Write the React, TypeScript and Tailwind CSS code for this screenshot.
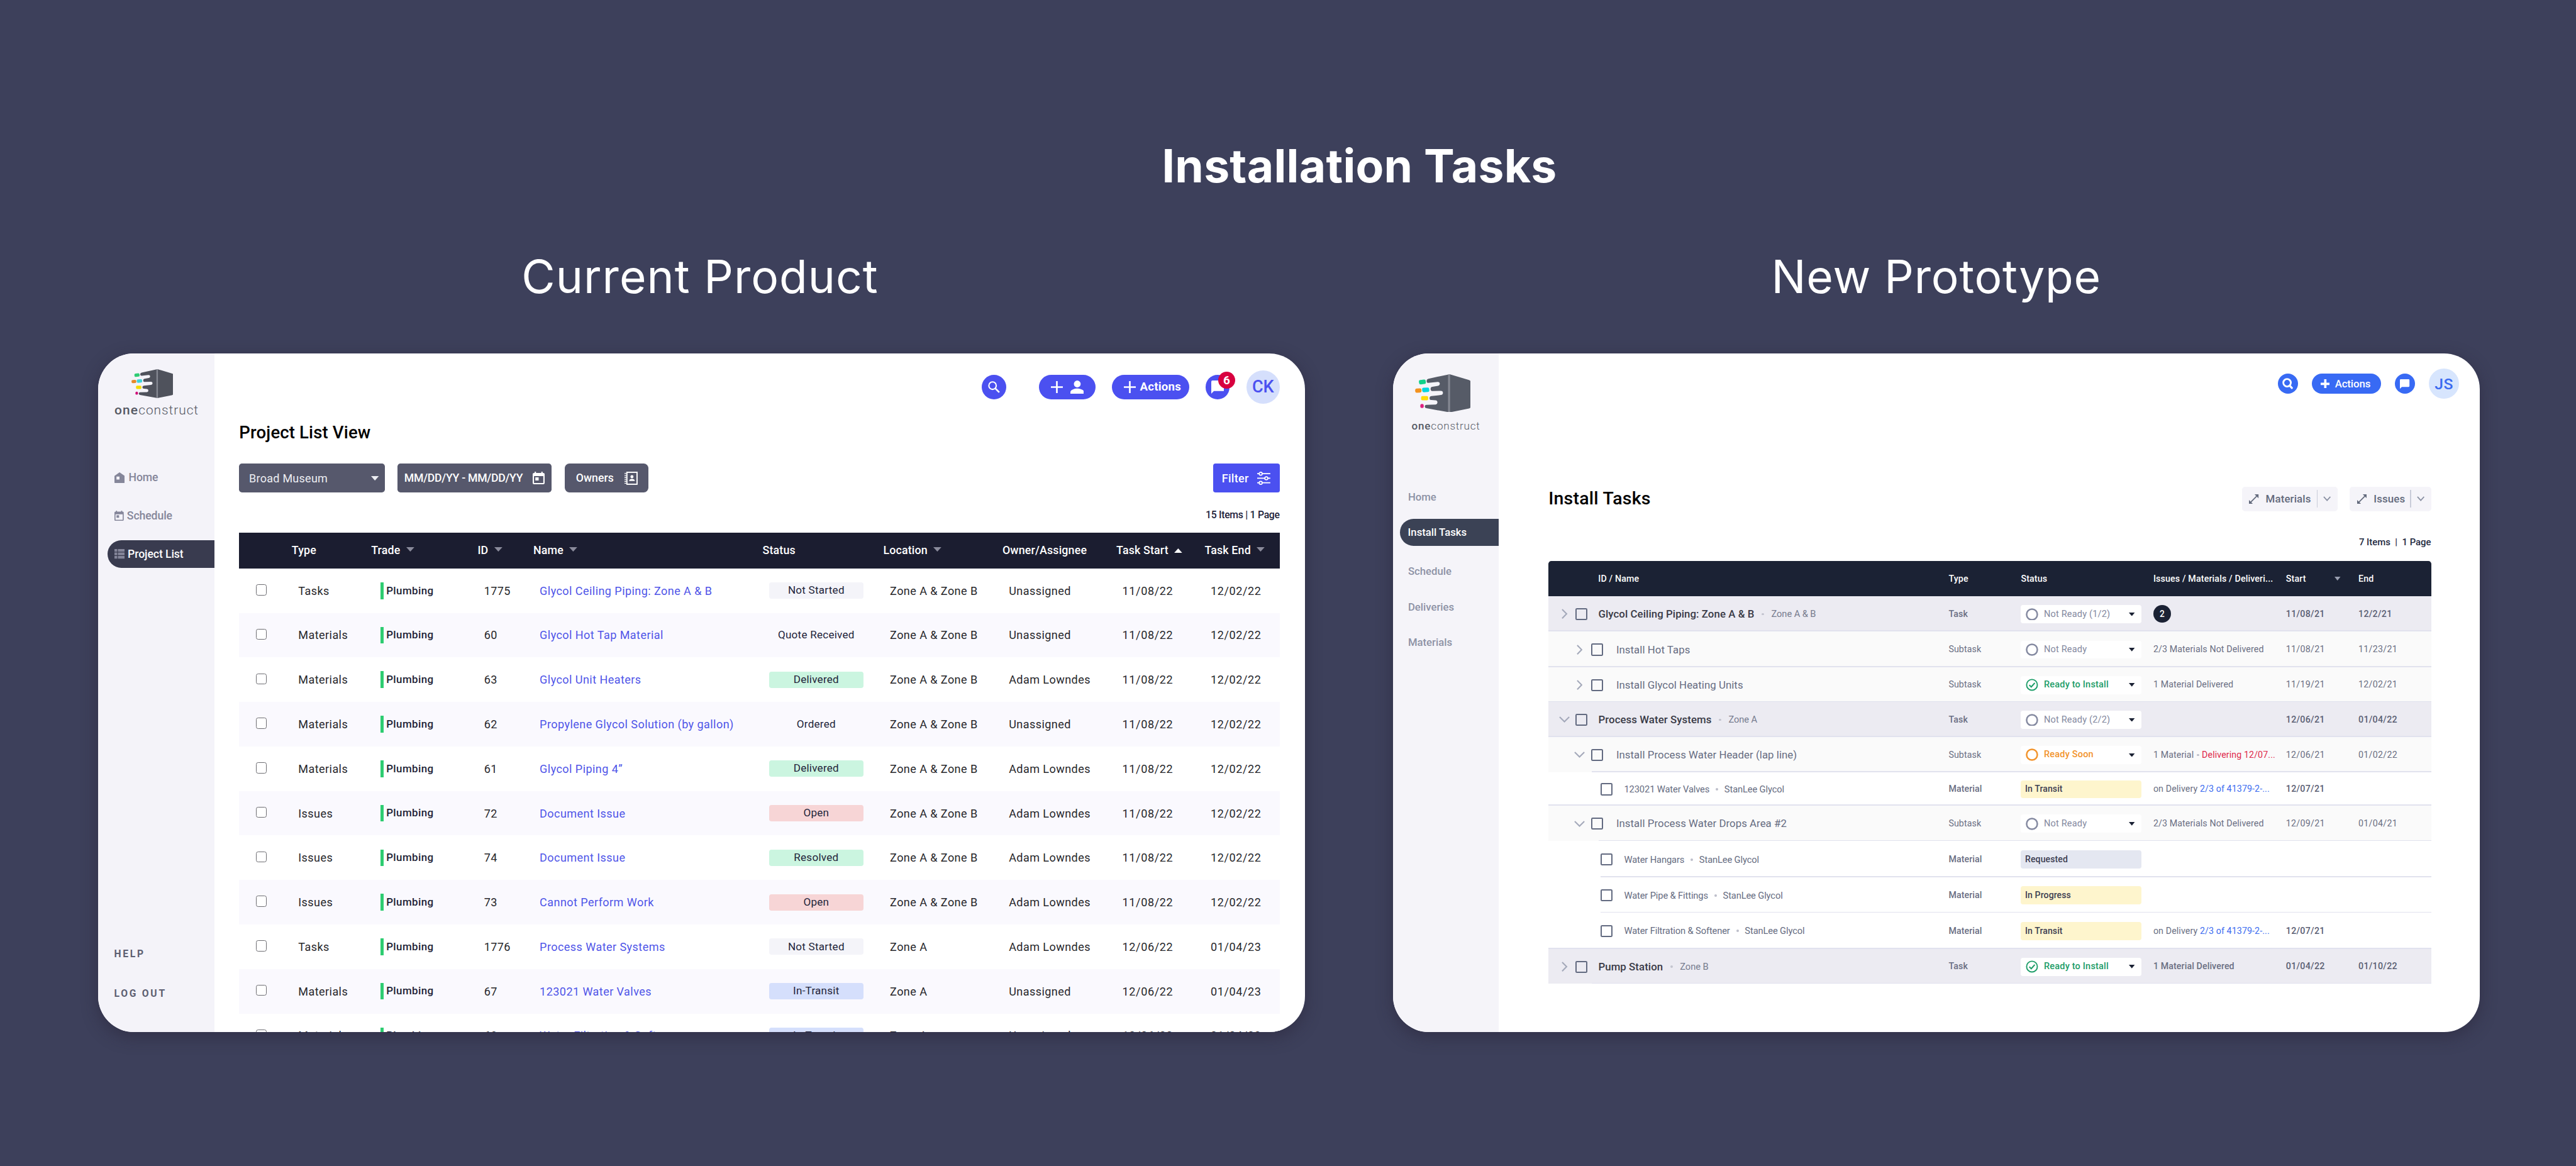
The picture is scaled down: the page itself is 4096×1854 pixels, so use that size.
import React from "react";

/* ---------- icons ---------- */

type LogoColors = { body: string; green: string; orange: string; cyan: string; yellow: string; pink: string };

const mutedLogo: LogoColors = { body: "#4f525c", green: "#2fcb74", orange: "#e58a2b", cyan: "#3dd3d8", yellow: "#f5dc00", pink: "#cf0d78" };
const vividLogo: LogoColors = { body: "#565b67", green: "#12d18a", orange: "#f3921f", cyan: "#05d5de", yellow: "#ffdc0a", pink: "#de2080" };

function LogoMark({ colors, className }: { colors: LogoColors; className: string }) {
  return (
    <svg viewBox="119 55 211 145" preserveAspectRatio="none" className={className}>
      <path
        fill={colors.body}
        d="M246 56 L170 72 Q163 74 163 81 Q163 88 170 88 L205 84 Q213 84 213 91 Q213 98 206 99 L185 103 Q178 104 178 111 Q178 119 186 119 L217 118 Q225 118 225 126 Q225 133 217 134 L182 138 Q174 139 174 146 Q174 153 182 153 L197 154 Q204 155 204 162 Q204 169 197 170 L162 171 Q156 171 156 177 Q156 183 162 184 L246 199 Z"
      />
      <path fill={colors.body} d="M250 55 L324 77 Q330 79 330 84 V178 Q330 183 324 185 L250 200 Z" />
      <rect x="244.5" y="55.5" width="7.5" height="144" fill="#858892" />
      <rect x="134" y="76" width="26" height="17" rx="6" fill={colors.green} transform="rotate(-7 147 85)" />
      <rect x="119.5" y="109" width="24" height="16" rx="6" fill={colors.orange} transform="rotate(-4 131 117)" />
      <rect x="146" y="106" width="27" height="17" rx="6" fill={colors.cyan} transform="rotate(-4 159 114)" />
      <rect x="142" y="138" width="27" height="16" rx="5" fill={colors.yellow} />
      <rect x="139" y="168" width="13" height="15" rx="6" fill={colors.pink} />
    </svg>
  );
}

const Plus = ({ size, width }: { size: number; width: number }) => (
  <svg width={size} height={size} viewBox="0 0 20 20" fill="none" stroke="currentColor" strokeWidth={width}>
    <path d="M10 0V20M0 10H20" />
  </svg>
);

const SearchThin = () => (
  <svg width="20" height="20" viewBox="0 0 20 20" fill="none" stroke="currentColor" strokeWidth="2.2">
    <circle cx="7.6" cy="7.6" r="6.2" />
    <path d="M12 12L18.8 18.8" strokeWidth="2.8" />
  </svg>
);

const SearchBold = () => (
  <svg width="18" height="19" viewBox="0 0 18 19" fill="none" stroke="currentColor" strokeWidth="3" strokeLinecap="round">
    <circle cx="8" cy="8" r="6.3" />
    <path d="M12.4 12.8L16 16.6" strokeWidth="3.4" />
  </svg>
);

const Person = () => (
  <svg width="23" height="23" viewBox="0 0 23 23" fill="currentColor">
    <circle cx="11.5" cy="5.8" r="5.7" />
    <path d="M0 23V19.5C0 15.5 7.5 13.5 11.5 13.5S23 15.5 23 19.5V23Z" />
  </svg>
);

const Bubble = ({ size }: { size: number }) => (
  <svg width={size} height={size} viewBox="0 0 20 20" fill="currentColor">
    <path d="M1.8 0H18.2A1.8 1.8 0 0 1 20 1.8V14.2A1.8 1.8 0 0 1 18.2 16H4L0 20V1.8A1.8 1.8 0 0 1 1.8 0Z" />
  </svg>
);

const HomeIcon = () => (
  <svg width="17" height="18" viewBox="0 0 17 18" fill="currentColor">
    <path fillRule="evenodd" d="M8.5 0L17 6V16.8Q17 18 15.8 18H1.2Q0 18 0 16.8V6ZM3.4 7V12H8.4V7Z" />
  </svg>
);

const CalendarIcon = ({ w, h }: { w: number; h: number }) => (
  <svg width={w} height={h} viewBox="3 1 18 20" preserveAspectRatio="none" fill="currentColor">
    <path d="M19 3h-1V1h-2v2H8V1H6v2H5c-1.11 0-2 .9-2 2v14a2 2 0 002 2h14c1.1 0 2-.9 2-2V5c0-1.1-.9-2-2-2zm0 16H5V8h14v11zM7 10h5v5H7z" />
  </svg>
);

const ListIcon = () => (
  <svg width="17" height="16" viewBox="0 0 17 16" fill="currentColor">
    <path d="M0 0H4.6V4.4H0ZM5.8 0H17V4.4H5.8ZM0 5.8H4.6V10.2H0ZM5.8 5.8H17V10.2H5.8ZM0 11.6H4.6V16H0ZM5.8 11.6H17V16H5.8Z" />
  </svg>
);

const AddressBook = () => (
  <svg width="22" height="22" viewBox="0 0 22 22" fill="none" stroke="currentColor">
    <rect x="4" y="1" width="17" height="20" strokeWidth="2" />
    <path d="M0 2.8H3M0 6.2H3M0 9.5H3M0 12.8H3M0 16.1H3M0 19.3H3" strokeWidth="1.4" />
    <circle cx="12.5" cy="8.4" r="2.6" fill="currentColor" stroke="none" />
    <path d="M7.8 15.6C7.8 12.8 10.5 12 12.5 12S17.2 12.8 17.2 15.6Z" fill="currentColor" stroke="none" />
  </svg>
);

const Sliders = () => (
  <svg width="22" height="22" viewBox="0 0 22 22" fill="none" stroke="currentColor" strokeWidth="1.8">
    <path d="M0 3.4H3.2M8.6 3.4H22M0 11H12.6M18 11H22M0 18.6H3.2M8.6 18.6H22" />
    <circle cx="5.9" cy="3.4" r="2.5" />
    <circle cx="15.3" cy="11" r="2.5" />
    <circle cx="5.9" cy="18.6" r="2.5" />
  </svg>
);

const ExpandArrows = () => (
  <svg width="16" height="16" viewBox="0 0 16 16" fill="currentColor">
    <path d="M3 13L13 3" stroke="currentColor" strokeWidth="1.7" />
    <path d="M16 0V6.6L9.4 0ZM0 16V9.4L6.6 16Z" />
  </svg>
);

const ChevronDown = ({ w, h, stroke = 2.2 }: { w: number; h: number; stroke?: number }) => (
  <svg width={w} height={h} viewBox={`0 0 ${w} ${h}`} fill="none" stroke="currentColor" strokeWidth={stroke}>
    <path d={`M1 1L${w / 2} ${h - 2}L${w - 1} 1`} />
  </svg>
);

const ChevronRight = () => (
  <svg width="10" height="17" viewBox="0 0 10 17" fill="none" stroke="currentColor" strokeWidth="2.2">
    <path d="M1 1L8.4 8.5L1 16" />
  </svg>
);

const Triangle = ({ w, h, up = false }: { w: number; h: number; up?: boolean }) => (
  <svg width={w} height={h} viewBox="0 0 10 6" preserveAspectRatio="none" fill="currentColor">
    <path d={up ? "M0 6L5 0L10 6Z" : "M0 0L5 6L10 0Z"} />
  </svg>
);

const StatusRing = ({ done }: { done: boolean }) => (
  <svg width="21" height="21" viewBox="0 0 21 21" fill="none" stroke="currentColor" strokeWidth="2.4">
    <circle cx="10.5" cy="10.5" r="9" strokeWidth={done ? 2 : 2.6} />
    {done && <path d="M6 10.8L9.3 14L15.2 7.2" strokeWidth="2.2" />}
  </svg>
);

/* ---------- current product ---------- */

const projectColumns = [
  { label: "" },
  { label: "Type" },
  { label: "Trade", sort: "down" },
  { label: "ID", sort: "down" },
  { label: "Name", sort: "down" },
  { label: "Status" },
  { label: "Location", sort: "down" },
  { label: "Owner/Assignee" },
  { label: "Task Start", sort: "up" },
  { label: "Task End", sort: "down" },
];

const pillColors: Record<string, string> = {
  "Not Started": "bg-[#f4f4f9]",
  Delivered: "bg-[#cbf5e0]",
  Resolved: "bg-[#cbf5e0]",
  Open: "bg-[#f7d5d6]",
  "In-Transit": "bg-[#d5dffc]",
};

const projectRows = [
  ["Tasks", "1775", "Glycol Ceiling Piping: Zone A & B", "Not Started", "Zone A & Zone B", "Unassigned", "11/08/22", "12/02/22"],
  ["Materials", "60", "Glycol Hot Tap Material", "Quote Received", "Zone A & Zone B", "Unassigned", "11/08/22", "12/02/22"],
  ["Materials", "63", "Glycol Unit Heaters", "Delivered", "Zone A & Zone B", "Adam Lowndes", "11/08/22", "12/02/22"],
  ["Materials", "62", "Propylene Glycol Solution (by gallon)", "Ordered", "Zone A & Zone B", "Unassigned", "11/08/22", "12/02/22"],
  ["Materials", "61", "Glycol Piping 4”", "Delivered", "Zone A & Zone B", "Adam Lowndes", "11/08/22", "12/02/22"],
  ["Issues", "72", "Document Issue", "Open", "Zone A & Zone B", "Adam Lowndes", "11/08/22", "12/02/22"],
  ["Issues", "74", "Document Issue", "Resolved", "Zone A & Zone B", "Adam Lowndes", "11/08/22", "12/02/22"],
  ["Issues", "73", "Cannot Perform Work", "Open", "Zone A & Zone B", "Adam Lowndes", "11/08/22", "12/02/22"],
  ["Tasks", "1776", "Process Water Systems", "Not Started", "Zone A", "Adam Lowndes", "12/06/22", "01/04/23"],
  ["Materials", "67", "123021 Water Valves", "In-Transit", "Zone A", "Unassigned", "12/06/22", "01/04/23"],
  ["Materials", "68", "Water Filtration & Softener", "In-Transit", "Zone A", "Unassigned", "12/06/22", "01/04/23"],
];

const projectGrid = "grid grid-cols-[87.9px_133px_178.2px_93.3px_383.7px_202px_199.5px_190.8px_147.7px_1fr] items-center";

function ProjectSidebar() {
  return (
    <aside className="flex w-[194.7px] shrink-0 flex-col bg-[#f4f3f9]">
      <LogoMark colors={mutedLogo} className="ml-[55.7px] mt-[26.3px] h-[48.4px] w-[70.3px]" />
      <div className="ml-[27.5px] mt-[6.3px] flex text-[22px] leading-[28px] text-[#555863]">
        <span className="font-medium tracking-[1.3px]">one</span>
        <span className="font-light tracking-[1px]">construct</span>
      </div>
      <nav className="mt-[75px] flex flex-col gap-[17px] text-[18.6px] font-medium tracking-[-0.1px] text-[#85869a]">
        <div className="flex h-[47px] items-center gap-[6.8px] pl-[27.5px]"><HomeIcon /><span>Home</span></div>
        <div className="flex h-[47px] items-center gap-[5.5px] pl-[27.5px]"><CalendarIcon w={15.5} h={17} /><span>Schedule</span></div>
        <div className="ml-[16.4px] flex h-[47px] items-center gap-[5.3px] rounded-l-full bg-[#393b4f] pl-[11.1px]"><ListIcon /><span className="text-white">Project List</span></div>
      </nav>
      <div className="mb-[52px] ml-[27px] mt-auto flex flex-col gap-[42.5px] text-[16.5px] font-bold leading-[24px] tracking-[2.9px] text-[#5d5f71]">
        <span>HELP</span>
        <span>LOG OUT</span>
      </div>
    </aside>
  );
}

function ProjectListCard() {
  return (
    <section className="flex h-[1136px] w-[2020px] shrink-0 overflow-hidden rounded-[60px] bg-white">
      <ProjectSidebar />
      <main className="flex min-w-0 flex-1 flex-col pl-[41.7px] pr-[42px] pt-[28px]">
        <header className="flex h-[56px] shrink-0 items-center justify-end text-white">
          <button className="mr-[55px] flex size-[40.3px] items-center justify-center rounded-full bg-[#4b50f0]"><SearchThin /></button>
          <button className="mr-[28px] flex h-[40.3px] w-[94.5px] items-center rounded-full bg-[#4b50f0] pl-[20.5px]"><Plus size={20} width={2.8} /><span className="ml-[12px]"><Person /></span></button>
          <button className="mr-[27.3px] flex h-[40.3px] w-[129.3px] items-center rounded-full bg-[#4b50f0] pl-[20px] text-[19.7px] font-bold tracking-[0.2px]"><Plus size={20} width={2.8} /><span className="ml-[6.8px]">Actions</span></button>
          <button className="relative mr-[28px] flex size-[40.3px] items-center justify-center rounded-full bg-[#4b50f0]">
            <Bubble size={22} />
            <span className="absolute -top-[5.5px] left-[21.5px] flex size-[28px] items-center justify-center rounded-full bg-[#d8003f] text-[20px] font-bold leading-none">6</span>
          </button>
          <div className="flex size-[55.8px] items-center justify-center rounded-full bg-[#d5dffc] text-[28.5px] font-medium tracking-[-0.3px] text-[#4b50f0]">CK</div>
        </header>
        <h3 className="mt-[31px] h-[34px] shrink-0 text-[29px] font-medium leading-[34px] tracking-[0.15px] text-black">Project List View</h3>
        <div className="mt-[34.7px] flex h-[49px] shrink-0 text-white">
          <div className="mr-[21.5px] flex w-[243.9px] items-center justify-between rounded-[5px] bg-[#56586c] pl-[16.5px] pr-[10px] text-[19px] tracking-[0.26px] text-[#ecedf2]"><span>Broad Museum</span><Triangle w={13} h={7.5} /></div>
          <div className="mr-[22px] flex w-[257.9px] items-center justify-between rounded-[5px] bg-[#56586c] pl-[11px] pr-[12px] text-[18.6px] font-medium tracking-[-0.29px]"><span>MM/DD/YY - MM/DD/YY</span><CalendarIcon w={20} h={21} /></div>
          <div className="flex w-[139.7px] items-center justify-between rounded-[8px] bg-[#56586c] pl-[18.5px] pr-[17.7px] text-[18.6px] font-medium"><span>Owners</span><AddressBook /></div>
          <button className="ml-auto flex w-[110.8px] items-center justify-between rounded-[4px] bg-[#4b50f0] pl-[14px] pr-[16px] text-[19px] font-medium tracking-[0.3px]"><span>Filter</span><Sliders /></button>
        </div>
        <div className="mt-[26.5px] h-[20px] shrink-0 text-right text-[16.6px] font-medium leading-[20px] tracking-[-0.28px] text-[#20223a]">15 Items | 1 Page</div>
        <div className="mt-[20.1px] shrink-0">
          <div className={`${projectGrid} h-[60.3px] bg-[#1b1d30] text-[18.8px] font-medium tracking-[0.15px] text-white`}>
            {projectColumns.map((c) => (
              <div key={c.label} className="flex items-center gap-[10px] whitespace-nowrap">
                <span>{c.label}</span>
                {c.sort === "down" && <span className="-mt-[3px] text-[#8a8b9b]"><Triangle w={13.5} h={7.5} /></span>}
                {c.sort === "up" && <span><Triangle up w={13.5} h={7.5} /></span>}
              </div>
            ))}
          </div>
          {projectRows.map(([type, id, name, status, location, owner, start, end]) => (
            <div key={id} className={`${projectGrid} h-[74.5px] whitespace-nowrap text-[19px] tracking-[0.46px] text-[#27272b] even:bg-white odd:bg-[#faf9fe]`}>
              <div className="-mt-[3px] ml-[28px] size-[18.5px] rounded-[3.5px] border-[1.6px] border-[#6d6d72] bg-white" />
              <div className="pl-[11px]">{type}</div>
              <div className="flex items-center pl-[15.3px]">
                <span className="h-[28px] w-[5.2px] bg-[#2ecc71]" />
                <span className="pl-[4.8px] text-[17.8px] font-medium tracking-[0.44px] text-[#1d1f36]">Plumbing</span>
              </div>
              <div className="pl-[10.8px]">{id}</div>
              <div className="pl-[10.6px] text-[#4f55e8]">{name}</div>
              <div className="pl-[11.2px]">
                <div className={`flex h-[27.5px] w-[157.3px] items-center justify-center rounded-[4px] text-[18px] tracking-[0.25px] text-[#23243a] ${pillColors[status] ?? ""}`}>{status}</div>
              </div>
              <div className="pl-[11.3px]">{location}</div>
              <div className="pl-[10.8px]">{owner}</div>
              <div className="pl-[10px] tracking-[0.66px]">{start}</div>
              <div className="pl-[10px] tracking-[0.66px]">{end}</div>
            </div>
          ))}
        </div>
      </main>
    </section>
  );
}

/* ---------- new prototype ---------- */

type Kind = "task" | "subtask" | "material";
type TaskRow = {
  kind: Kind;
  name: string;
  detail?: string;
  open?: boolean;
  status: string;
  note?: React.ReactNode;
  start?: string;
  end?: string;
  height: string;
  line: string;
};

const Link = ({ children }: { children: string }) => <span className="text-[#3b6cf0]">{children}</span>;

const LateDelivery = () => (
  <div className="flex items-center">
    <span>1 Material</span>
    <span className="ml-[5.5px] mr-[4.5px] size-[3.5px] rounded-full bg-[#bdbfca]" />
    <span className="text-[#e0294b]">Delivering 12/07...</span>
  </div>
);

const taskRows: TaskRow[] = [
  { kind: "task", name: "Glycol Ceiling Piping: Zone A & B", detail: "Zone A & B", status: "Not Ready (1/2)", note: "badge", start: "11/08/21", end: "12/2/21", height: "h-[58.7px]", line: "ml-0" },
  { kind: "subtask", name: "Install Hot Taps", status: "Not Ready", note: "2/3 Materials Not Delivered", start: "11/08/21", end: "11/23/21", height: "h-[60.3px]", line: "ml-0" },
  { kind: "subtask", name: "Install Glycol Heating Units", status: "Ready to Install", note: "1 Material Delivered", start: "11/19/21", end: "12/02/21", height: "h-[58px]", line: "ml-0" },
  { kind: "task", name: "Process Water Systems", detail: "Zone A", open: true, status: "Not Ready (2/2)", start: "12/06/21", end: "01/04/22", height: "h-[58.5px]", line: "ml-0" },
  { kind: "subtask", name: "Install Process Water Header (lap line)", open: true, status: "Ready Soon", note: <LateDelivery />, start: "12/06/21", end: "01/02/22", height: "h-[59.2px]", line: "ml-[72px]" },
  { kind: "material", name: "123021 Water Valves", detail: "StanLee Glycol", status: "In Transit", note: <>on Delivery <Link>2/3 of 41379-2-...</Link></>, start: "12/07/21", height: "h-[55.8px]", line: "ml-0" },
  { kind: "subtask", name: "Install Process Water Drops Area #2", open: true, status: "Not Ready", note: "2/3 Materials Not Delivered", start: "12/09/21", end: "01/04/21", height: "h-[59.5px]", line: "ml-[83.6px]" },
  { kind: "material", name: "Water Hangars", detail: "StanLee Glycol", status: "Requested", height: "h-[60.4px]", line: "ml-[87px]" },
  { kind: "material", name: "Water Pipe & Fittings", detail: "StanLee Glycol", status: "In Progress", height: "h-[59.3px]", line: "ml-[87px]" },
  { kind: "material", name: "Water Filtration & Softener", detail: "StanLee Glycol", status: "In Transit", note: <>on Delivery <Link>2/3 of 41379-2-...</Link></>, start: "12/07/21", height: "h-[60.5px]", line: "ml-0" },
  { kind: "task", name: "Pump Station", detail: "Zone B", status: "Ready to Install", note: "1 Material Delivered", start: "01/04/22", end: "01/10/22", height: "h-[58.9px]", line: "ml-[72px]" },
];

const rowBg: Record<Kind, string> = { task: "bg-[#ecebf2]", subtask: "bg-[#fafafa]", material: "bg-white" };
const typeLabel: Record<Kind, string> = { task: "Task", subtask: "Subtask", material: "Material" };
const typeWeight: Record<Kind, string> = { task: "font-medium", subtask: "font-normal", material: "font-medium" };

const taskGrid = "grid grid-cols-[669.8px_121.1px_221.6px_222px_121.3px_1fr] items-center";

function NameCell({ row }: { row: TaskRow }) {
  const box = <span className="size-[20.3px] shrink-0 rounded-[2.5px] border-[2.2px] border-[#626a80]" />;
  if (row.kind === "material") {
    return (
      <div className="flex items-center whitespace-nowrap pl-[87px] text-[15.5px] tracking-[-0.15px] text-[#666c81]">
        {box}
        <span className="ml-[19.4px]">{row.name}</span>
        <span className="mx-[10.3px] size-[4.3px] rounded-full bg-[#bdbfca]" />
        <span>{row.detail}</span>
      </div>
    );
  }
  const isTask = row.kind === "task";
  return (
    <div className={isTask ? "flex items-center whitespace-nowrap pl-[17px]" : "flex items-center whitespace-nowrap pl-[42px]"}>
      <span className="flex w-[20px] justify-center text-[#a4a9ba]">{row.open ? <ChevronDown w={18} h={11} /> : <ChevronRight />}</span>
      <span className={isTask ? "ml-[8px] mr-[18.2px] flex" : "ml-[9px] mr-[22.2px] flex"}>{box}</span>
      <span className={isTask ? "text-[17.7px] font-medium leading-[22px] tracking-[0.08px] text-[#393a46]" : "text-[17.7px] leading-[22px] tracking-[0.05px] text-[#676d82]"}>{row.name}</span>
      {row.detail && (
        <>
          <span className="ml-[12.5px] mr-[12px] size-[4px] rounded-full bg-[#c3c4cf]" />
          <span className="text-[15.5px] tracking-[-0.1px] text-[#777c8e]">{row.detail}</span>
        </>
      )}
    </div>
  );
}

function StatusCell({ row }: { row: TaskRow }) {
  if (row.kind === "material") {
    return (
      <div className={`flex h-[30.5px] w-[201.8px] items-center rounded-[4px] pl-[7px] text-[14.8px] font-medium text-[#3d4052] ${row.status === "Requested" ? "bg-[#e4e7f1]" : "bg-[#fef5cd]"}`}>
        {row.status}
      </div>
    );
  }
  const done = row.status === "Ready to Install";
  const soon = row.status === "Ready Soon";
  const tone = done ? "font-medium text-[#1d9d68]" : soon ? "font-medium text-[#f2942c]" : "text-[#8489a0]";
  return (
    <div className={`flex h-[30.5px] w-[201.8px] items-center rounded-[4px] bg-white pl-[8px] pr-[11.5px] text-[15.3px] tracking-[0.2px] ${tone}`}>
      <StatusRing done={done} />
      <span className="ml-[9.5px]">{row.status}</span>
      <span className="ml-auto text-[#1b2234]"><Triangle w={10} h={6} /></span>
    </div>
  );
}

function SplitButton({ label, width }: { label: string; width: string }) {
  return (
    <button className={`flex h-[40.5px] items-center rounded-[5px] bg-[#f5f4f9] pl-[12.4px] text-[17.8px] font-medium tracking-[0.12px] text-[#636a7c] ${width}`}>
      <ExpandArrows />
      <span className="ml-[11.5px]">{label}</span>
      <span className="ml-auto h-[29.5px] w-[1.8px] bg-[#c9ccd9]" />
      <span className="ml-[9.5px] mr-[11px] text-[#8a90a3]"><ChevronDown w={13} h={9} stroke={1.8} /></span>
    </button>
  );
}

function PrototypeSidebar() {
  return (
    <aside className="flex w-[176.5px] shrink-0 flex-col bg-[#f5f4f9]">
      <LogoMark colors={vividLogo} className="ml-[36.2px] mt-[33.9px] h-[64px] w-[93px]" />
      <div className="ml-[30.8px] mt-[12.1px] flex text-[18px] leading-[22px] text-[#565b67]">
        <span className="font-medium tracking-[0.9px]">one</span>
        <span className="font-light tracking-[0.8px]">construct</span>
      </div>
      <nav className="mt-[85.5px] flex flex-col text-[17.6px] font-medium text-[#8d92a5]">
        <div className="flex h-[44.7px] items-center pl-[25px]">Home</div>
        <div className="ml-[11.2px] mt-[14.8px] flex h-[44.7px] items-center rounded-l-full bg-[#3b4255] pl-[13.5px] text-white">Install Tasks</div>
        <div className="mt-[21px] flex h-[44.7px] items-center pl-[25px]">Schedule</div>
        <div className="mt-[14.6px] flex h-[44.7px] items-center pl-[25px]">Deliveries</div>
        <div className="mt-[14.6px] flex h-[44.7px] items-center pl-[25px]">Materials</div>
      </nav>
    </aside>
  );
}

function PrototypeCard() {
  return (
    <section className="flex h-[1136px] w-[1819px] shrink-0 overflow-hidden rounded-[60px] bg-white">
      <PrototypeSidebar />
      <main className="flex min-w-0 flex-1 flex-col pl-[83.5px] pr-[81.6px] pt-[25.3px]">
        <header className="-mr-[46.8px] flex h-[50px] shrink-0 items-center justify-end text-white">
          <button className="mr-[23.8px] flex size-[33.2px] items-center justify-center rounded-full bg-[#386af4]"><SearchBold /></button>
          <button className="mr-[23.6px] flex h-[33.2px] w-[115.2px] items-center rounded-full bg-[#386af4] pl-[14px] text-[17.7px] font-medium tracking-[-0.1px]"><Plus size={15.5} width={5} /><span className="ml-[8.7px]">Actions</span></button>
          <button className="mr-[23.6px] flex size-[33.2px] items-center justify-center rounded-full bg-[#386af4]"><Bubble size={16} /></button>
          <div className="flex size-[50.4px] items-center justify-center rounded-full bg-[#d7e5fd] text-[26px] font-medium tracking-[0.4px] text-[#3a6af0]">JS</div>
        </header>
        <div className="mt-[147.7px] flex h-[40.3px] shrink-0 items-center">
          <h3 className="mr-auto text-[30px] font-medium leading-none tracking-[0.25px] text-black">Install Tasks</h3>
          <div className="flex gap-[20.3px]">
            <SplitButton label="Materials" width="w-[160.4px]" />
            <SplitButton label="Issues" width="w-[136px]" />
          </div>
        </div>
        <div className="mt-[42.5px] h-[20px] shrink-0 whitespace-pre text-right text-[15.7px] font-medium leading-[20px] text-[#232a3f]">7 Items  |  1 Page</div>
        <div className="mt-[21.2px] shrink-0">
          <div className={`${taskGrid} h-[59px] whitespace-nowrap rounded-t-[5px] bg-[#1b2234] pt-[1px] text-[15px] font-medium tracking-[0.15px] text-white`}>
            <div className="pl-[83.3px]">ID / Name</div>
            <div>Type</div>
            <div>Status</div>
            <div>Issues / Materials / Deliveri...</div>
            <div className="flex items-center"><span className="w-[81.5px]">Start</span><span className="text-[#9a9fb0]"><Triangle w={10} h={6.5} /></span></div>
            <div>End</div>
          </div>
          {taskRows.map((row) => (
            <div key={row.name} className={`flex flex-col ${rowBg[row.kind]} ${row.height}`}>
              <div className={`${taskGrid} flex-1 whitespace-nowrap pt-[3px] text-[15px] tracking-[0.1px] text-[#6a6f83]`}>
                <NameCell row={row} />
                <div className={typeWeight[row.kind]}>{typeLabel[row.kind]}</div>
                <StatusCell row={row} />
                {row.note === "badge" ? (
                  <div className="flex size-[29.5px] items-center justify-center rounded-full bg-[#1b2234] text-[14.5px] font-medium text-white">2</div>
                ) : (
                  <div className={row.kind === "task" ? "font-medium" : ""}>{row.note}</div>
                )}
                <div className={row.kind === "subtask" ? "tracking-[0.3px]" : "font-medium tracking-[0.3px] text-[#5b6074]"}>{row.start}</div>
                <div className={row.kind === "subtask" ? "tracking-[0.3px]" : "font-medium tracking-[0.3px] text-[#5b6074]"}>{row.end}</div>
              </div>
              <div className={`h-[1.6px] shrink-0 bg-[#e1e2ee] ${row.line}`} />
            </div>
          ))}
        </div>
      </main>
    </section>
  );
}

export default function App() {
  return (
    <div className="h-[1854px] w-[4096px] overflow-hidden bg-[#3d405b]">
      <div className="flex h-[1952px] w-[4312px] flex-col font-['Roboto',sans-serif] [zoom:0.94991]">
        <h1 className="mt-[238px] pl-[1945px] font-['Inter',sans-serif] text-[77px] font-bold leading-[80px] tracking-[0.28px] text-white">Installation Tasks</h1>
        <div className="mt-[105px] flex whitespace-nowrap font-['Inter',sans-serif] text-[77px] leading-[80px] text-white">
          <h2 className="w-[2965px] pl-[873px] tracking-[1.05px]">Current Product</h2>
          <h2 className="tracking-[0.8px]">New Prototype</h2>
        </div>
        <div className="mt-[89px] flex pl-[164px]">
          <div className="mr-[148px] rounded-[60px] shadow-[0_8px_28px_rgba(34,28,44,0.4)]"><ProjectListCard /></div>
          <div className="rounded-[60px] shadow-[0_8px_28px_rgba(34,28,44,0.4)]"><PrototypeCard /></div>
        </div>
      </div>
    </div>
  );
}
